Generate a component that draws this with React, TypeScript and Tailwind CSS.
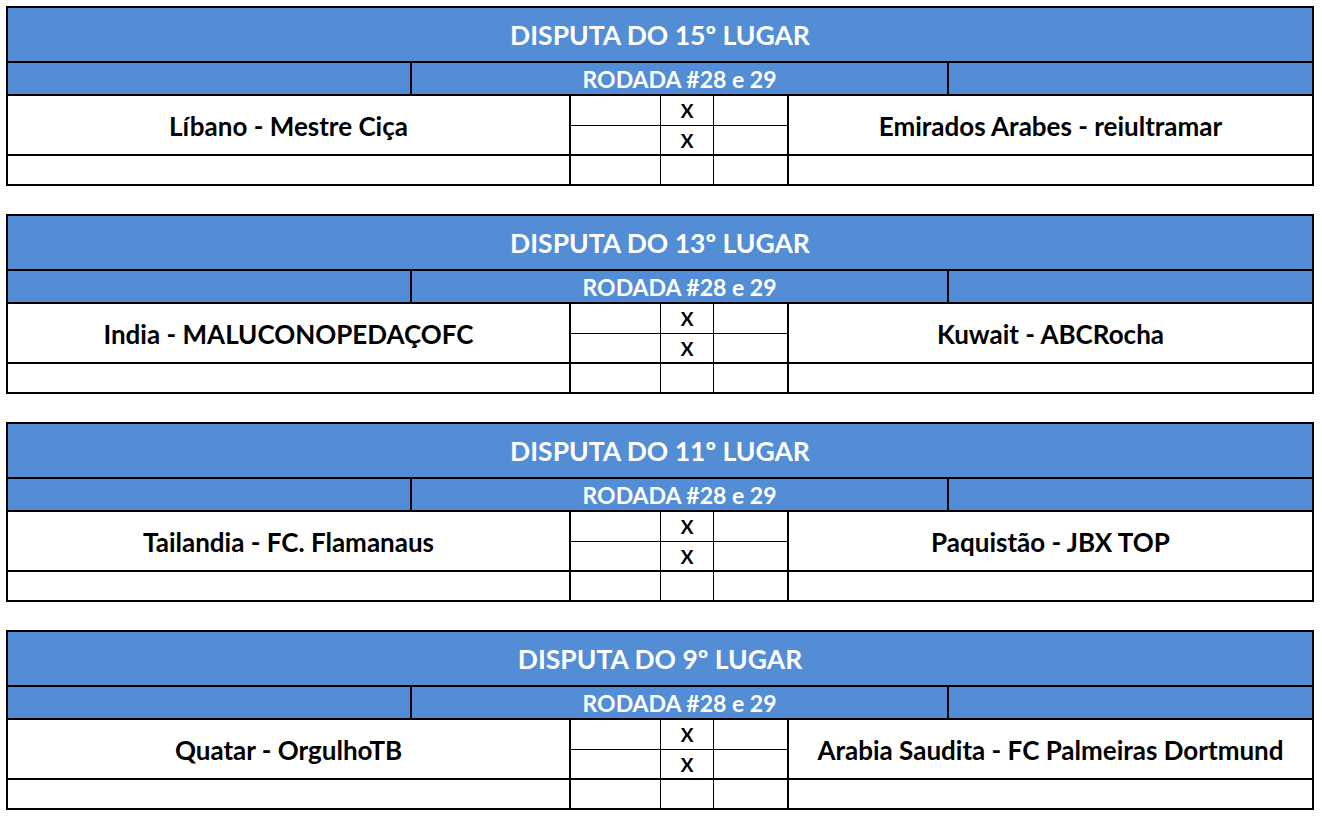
import React from 'react';

interface Match {
  title: string;
  home: string;
  away: string;
}

const matches: Match[] = [
  { title: 'DISPUTA DO 15º LUGAR', home: 'Líbano - Mestre Ciça', away: 'Emirados Arabes - reiultramar' },
  { title: 'DISPUTA DO 13º LUGAR', home: 'India - MALUCONOPEDAÇOFC', away: 'Kuwait - ABCRocha' },
  { title: 'DISPUTA DO 11º LUGAR', home: 'Tailandia - FC. Flamanaus', away: 'Paquistão - JBX TOP' },
  { title: 'DISPUTA DO 9º LUGAR', home: 'Quatar - OrgulhoTB', away: 'Arabia Saudita - FC Palmeiras Dortmund' },
];

const MatchBlock: React.FC<{ match: Match }> = ({ match }) => {
  return (
    <div className="w-[1308px] border-2 border-black">
      {/* Title */}
      <div className="h-[55px] bg-[#538dd5] border-b-2 border-black flex items-center justify-center pt-[2px] text-white text-[26.5px] font-bold">
        {match.title}
      </div>

      {/* Round */}
      <div className="h-[33px] bg-[#538dd5] border-b-2 border-black flex">
        <div className="w-[404px] border-r-2 border-black" />
        <div className="w-[537px] border-r-2 border-black flex items-center justify-center pt-[1px] text-white text-[23px] font-bold">
          RODADA #28 e 29
        </div>
        <div className="flex-1" />
      </div>

      {/* Match rows */}
      <div className="grid grid-cols-[563px_90px_53px_75px_1fr] grid-rows-[30px_30px_28px] bg-white">
        <div className="row-span-2 border-r-2 border-b-2 border-black flex items-center justify-center pt-[3px] text-black text-[26px] font-bold">
          {match.home}
        </div>
        <div className="border-r border-b border-black" />
        <div className="border-r border-b border-black flex items-center justify-center pt-[2px] text-[19px] font-bold">X</div>
        <div className="border-r-2 border-b border-black" />
        <div className="row-span-2 border-b-2 border-black flex items-center justify-center pt-[3px] text-black text-[26px] font-bold">
          {match.away}
        </div>

        <div className="border-r border-b-2 border-black" />
        <div className="border-r border-b-2 border-black flex items-center justify-center pt-[2px] text-[19px] font-bold">X</div>
        <div className="border-r-2 border-b-2 border-black" />

        <div className="border-r-2 border-black" />
        <div className="border-r border-black" />
        <div className="border-r border-black" />
        <div className="border-r-2 border-black" />
        <div />
      </div>
    </div>
  );
};

export default function App() {
  return (
    <div className="min-h-screen bg-white pl-[6px] pt-[6px] flex flex-col gap-[28px] font-['Lato',sans-serif]">
      {matches.map((m) => (
        <MatchBlock key={m.title} match={m} />
      ))}
    </div>
  );
}
